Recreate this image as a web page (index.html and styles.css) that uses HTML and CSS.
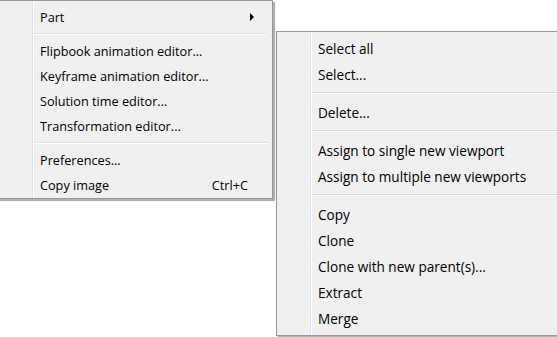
FILE: index.html
```html
<!DOCTYPE html>
<html lang="en">
<head>
  <meta charset="UTF-8">
  <title>Context menu</title>
  <link rel="stylesheet" href="styles.css">
</head>
<body>
  <!-- Main context menu -->
  <div class="menu menu-main">
    <div class="item">
      <span class="label">Part</span>
      <span class="arrow"></span>
    </div>
    <div class="sep"></div>
    <div class="item"><span class="label">Flipbook animation editor...</span></div>
    <div class="item"><span class="label">Keyframe animation editor...</span></div>
    <div class="item"><span class="label">Solution time editor...</span></div>
    <div class="item"><span class="label">Transformation editor...</span></div>
    <div class="sep"></div>
    <div class="item"><span class="label">Preferences...</span></div>
    <div class="item">
      <span class="label">Copy image</span>
      <span class="shortcut">Ctrl+C</span>
    </div>
  </div>

  <!-- Part submenu -->
  <div class="menu menu-sub">
    <div class="item"><span class="label">Select all</span></div>
    <div class="item"><span class="label">Select...</span></div>
    <div class="sep"></div>
    <div class="item"><span class="label">Delete...</span></div>
    <div class="sep"></div>
    <div class="item"><span class="label">Assign to single new viewport</span></div>
    <div class="item"><span class="label">Assign to multiple new viewports</span></div>
    <div class="sep"></div>
    <div class="item"><span class="label">Copy</span></div>
    <div class="item"><span class="label">Clone</span></div>
    <div class="item"><span class="label">Clone with new parent(s)...</span></div>
    <div class="item"><span class="label">Extract</span></div>
    <div class="item"><span class="label">Merge</span></div>
  </div>
</body>
</html>
```

FILE: styles.css
```css
body {
  margin: 0;
  padding: 0;
  height: 337px;
  overflow: hidden;
  background: #ffffff;
  font-family: 'Open Sans', 'Noto Sans', sans-serif;
  font-size: 12.7px;
  color: #000;
  display: flex;
  align-items: flex-start;
  gap: 3px;
}

.menu {
  background: linear-gradient(to right,
    #f0f0f0 33px, #e2e3e3 33px, #e2e3e3 34px,
    #ffffff 34px, #ffffff 35px, #f0f0f0 35px);
  border: 1px solid #979797;
  box-shadow: 2px 2px 1px rgba(0, 0, 0, 0.3);
  padding: 3px 2px;
  flex-shrink: 0;
}

.menu-main {
  width: 269px;
  margin-left: -2px;
  padding-bottom: 1px;
}

.menu-sub {
  width: 282px;
  margin-top: 31px;
  padding-bottom: 4px;
  font-size: 13.6px;
}

.item {
  height: 25px;
  display: flex;
  align-items: center;
  padding-left: 39px;
  padding-right: 20px;
}

.menu-sub .item {
  height: 26px;
}

.label {
  flex: 1;
  white-space: nowrap;
}

.shortcut {
  margin-right: 2px;
}

.arrow {
  width: 0;
  height: 0;
  border-top: 4px solid transparent;
  border-bottom: 4px solid transparent;
  border-left: 4px solid #000;
  margin-right: -4px;
}

.sep {
  height: 0;
  border-top: 1px solid #e0e0e0;
  border-bottom: 1px solid #ffffff;
  margin: 4px 3px 3px 33px;
}

.menu-sub .sep {
  margin-top: 5px;
  margin-bottom: 5px;
}
```
